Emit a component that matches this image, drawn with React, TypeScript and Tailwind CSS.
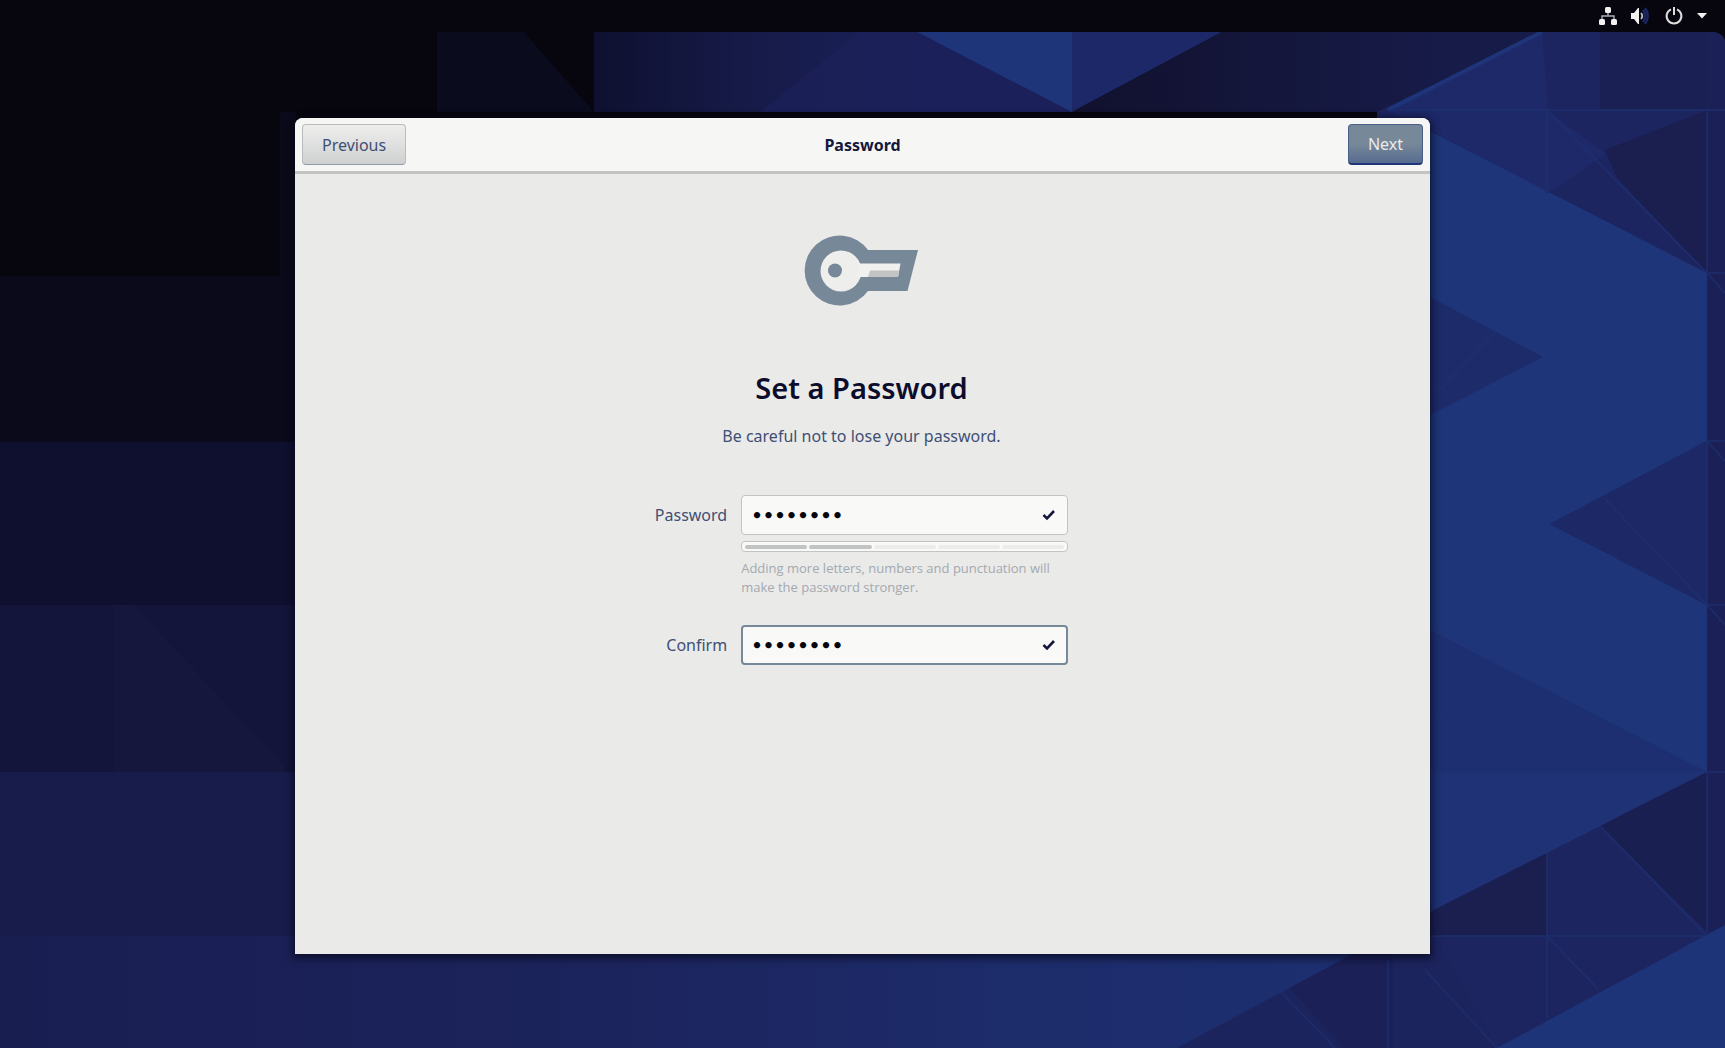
import { useState } from "react";

function Wallpaper() {
  return (
    <svg
      className="absolute inset-0 h-full w-full"
      viewBox="0 0 1725 1048"
      preserveAspectRatio="xMidYMid slice"
      aria-hidden="true"
    >
      <defs>
        <linearGradient id="sky" x1="594" y1="0" x2="917" y2="0" gradientUnits="userSpaceOnUse">
          <stop offset="0" stopColor="#0f1030" />
          <stop offset="0.5" stopColor="#161b49" />
          <stop offset="1" stopColor="#1b215a" />
        </linearGradient>
        <linearGradient id="dusk" x1="1072" y1="0" x2="1450" y2="0" gradientUnits="userSpaceOnUse">
          <stop offset="0" stopColor="#11112e" />
          <stop offset="1" stopColor="#171b48" />
        </linearGradient>
        <linearGradient id="floor" x1="0" y1="0" x2="1350" y2="0" gradientUnits="userSpaceOnUse">
          <stop offset="0" stopColor="#191e51" />
          <stop offset="0.45" stopColor="#1c245d" />
          <stop offset="0.75" stopColor="#1d2c6b" />
          <stop offset="1" stopColor="#1d2f70" />
        </linearGradient>
      </defs>
      <rect width="1725" height="1048" fill="#07060f" />
      <path d="M437 32h87l70 80h-157z" fill="#0b0b1e" />
      <path d="M594 32h323l160 80H594z" fill="url(#sky)" />
      <path d="M760 112l100-80h57l155 80z" fill="#1c215a" opacity="0.7" />
      <path d="M917 32h155v80z" fill="#1e3579" />
      <path d="M1072 32h150l-150 80z" fill="#1d2868" />
      <path d="M1222 32h320l-154 80h-316z" fill="url(#dusk)" />
      <rect y="276" width="296" height="166" fill="#0b0a1b" />
      <rect y="442" width="296" height="163" fill="#0f1030" />
      <rect y="605" width="296" height="167" fill="#13153a" />
      <path d="M114 605h20l150 160v7h-170z" fill="#15173d" />
      <rect y="772" width="296" height="164" fill="#181c4b" />
      <rect y="936" width="1450" height="112" fill="url(#floor)" />
      <rect x="280" y="112" width="16" height="164" fill="#0a0a1a" />

      <path d="M1542 32h183v1016h-348V112z" fill="#1d2560" />
      <path d="M1388 110l154-78 6 78-1 82-117-62z" fill="#1d2968" />
      <path d="M1542 32l-154 78" stroke="#1e3579" strokeWidth="4" />
      <path d="M1600 32h125v78h-125z" fill="#1b2054" />
      <path d="M1605 150l102-40v163l-90-95z" fill="#1a1f50" />
      <path d="M1707 32h18v900h-18z" fill="#1b2157" />
      <path d="M1430 131l277 142v168l-157 83 157 81v167l-277 140z" fill="#1e3579" />
      <path d="M1430 297l113 60-113 58z" fill="#1d2b6a" />
      <path d="M1430 630l277 142h-277z" fill="#1e2f71" />
      <path d="M1430 772h277l-277 140z" fill="#1e3275" />
      <path d="M1707 441l-157 83 157 81z" fill="#1d2867" />
      <path d="M1430 912l117-59v83h-117z" fill="#1a1f50" />
      <path d="M1600 826l107-54v160z" fill="#1a1f52" />
      <path d="M1380 940l-27 14-176 94h320l-60-108z" fill="#1c245d" />
      <path d="M1290 988l63-34h40v94h-50z" fill="#1b2056" />
      <path d="M1725 925l-228 123h228z" fill="#1e3478" />
      <path d="M1500 112l47 82 59-40-59-44z" fill="#1d2968" />
      <g stroke="#1e3272" strokeWidth="2" fill="none" opacity="0.6">
        <path d="M1388 110h337M1430 936h277M1430 772h295M1707 605h18M1707 441h18M1707 273h18" />
        <path d="M1547 110v82M1547 853v165M1707 110v163M1707 441v164M1707 772v160" />
        <path d="M1547 110l160 163M1604 498l103 107M1600 826l107 110M1547 936l52 54" />
        <path d="M1425 970l72 78M1437 392l58-60M1437 720l58-60" />
        <path d="M1281 992l54 56M1388 960v88M1707 273l18 20M1707 441l18 20M1707 605l18 20" />
      </g>
      <path d="M1715 32h10v8q-2-6-10-8" fill="#07060f" />
    </svg>
  );
}

function NetworkIcon() {
  return (
    <svg width="20" height="20" viewBox="0 0 20 20" fill="#f2f2f2" aria-hidden="true">
      <rect x="7" y="1" width="6" height="6" rx="1.500" />
      <rect x="1" y="13" width="6" height="6" rx="1.500" />
      <rect x="13" y="13" width="6" height="6" rx="1.500" />
      <path d="M10 7v3M4 13v-3h12v3" stroke="#a9aeb8" strokeWidth="1.400" fill="none" />
    </svg>
  );
}

function VolumeIcon() {
  return (
    <svg width="20" height="20" viewBox="0 0 20 20" aria-hidden="true">
      <path d="M1 7h3l4-5h1v16H8l-4-5H1z" fill="#f2f2f2" />
      <path d="M11 7q2.500 3 0 6" stroke="#c2c4c4" strokeWidth="1.800" fill="none" />
      <path d="M13 4q4 6 0 12M15 2q5.500 8 0 16" stroke="#1c2762" strokeWidth="2.400" fill="none" />
    </svg>
  );
}

function PowerIcon() {
  return (
    <svg width="20" height="20" viewBox="0 0 20 20" fill="none" stroke="#dcdddd" strokeWidth="2" aria-hidden="true">
      <path d="M7 3.400a7.400 7.400 0 1 0 6 0" />
      <path d="M10 1v8" />
    </svg>
  );
}

function TopBar() {
  return (
    <div className="relative flex h-8 items-center justify-end bg-[#07060f] pr-[17px] pb-px">
      <button type="button" aria-label="System menu" className="flex items-center">
        <NetworkIcon />
        <span className="ml-3 flex">
          <VolumeIcon />
        </span>
        <span className="ml-3.5 flex">
          <PowerIcon />
        </span>
        <svg className="ml-3" width="12" height="6" viewBox="0 0 12 6" fill="#f2f2f2" aria-hidden="true">
          <path d="M1 0h10L6 5.500z" />
        </svg>
      </button>
    </div>
  );
}

function KeyIcon() {
  return (
    <svg className="mx-auto" width="122" height="72" viewBox="-5 0 122 72" aria-hidden="true">
      <path d="M62 15H112L101.500 56H62A35 35 0 1 1 62 15z" fill="#778899" />
      <circle cx="35" cy="36" r="20.500" fill="#eeeeed" />
      <path d="M52 28.500H94.500L92 42H52z" fill="#f1f1f0" />
      <path d="M64 35.500H93L92 42H62z" fill="#c2c4c4" />
      <circle cx="29" cy="35.500" r="7" fill="#778899" />
    </svg>
  );
}

function PasswordField({
  id,
  value,
  onChange,
  focused = false,
}: {
  id: string;
  value: string;
  onChange: (value: string) => void;
  focused?: boolean;
}) {
  return (
    <div className="relative">
      <input
        id={id}
        type="password"
        value={value}
        onChange={(e) => onChange(e.target.value)}
        className={
          focused
            ? "block h-10 w-full rounded-sm border-2 border-[#778899] bg-[#f9faf8] pr-10 pl-2 font-['DejaVu_Sans',sans-serif] text-[18px] font-bold text-[#07060f] outline-none"
            : "block h-10 w-full rounded-sm border border-[#c2c4c4] bg-[#f9faf8] pr-10 pl-[9px] font-['DejaVu_Sans',sans-serif] text-[18px] font-bold text-[#07060f] outline-none"
        }
      />
      <svg
        className="absolute top-3.5 right-3"
        width="14"
        height="12"
        viewBox="0 0 14 12"
        fill="none"
        stroke="#15173d"
        strokeWidth="2.600"
        aria-hidden="true"
      >
        <path d="M1.500 6l3.500 3.400 7-7.400" />
      </svg>
    </div>
  );
}

const strengthSegments = [true, true, false, false, false];

export default function App() {
  const [password, setPassword] = useState("password");
  const [confirm, setConfirm] = useState("password");

  return (
    <div className="relative flex min-h-screen flex-col overflow-hidden bg-[#07060f] font-['Noto_Sans','Open_Sans',sans-serif] text-base text-[#3f4f74]">
      <Wallpaper />
      <TopBar />
      <main className="relative flex flex-1 justify-center px-6 pt-[86px] pb-[94px]">
        <section className="flex w-full max-w-[1135px] flex-col overflow-hidden rounded-t-lg bg-[#eaeae9] shadow-[0_2px_8px_2px_rgba(5,5,20,0.7)]">
          <header className="grid grid-cols-[1fr_auto_1fr] items-center border-b-3 border-[#c2c4c4] bg-[#f6f7f5] px-[7px] pt-1.5 pb-1.5">
            <button
              type="button"
              className="h-[41px] justify-self-start rounded-sm border border-[#b9bcbd] border-b-[#939ca6] bg-linear-to-b from-[#eeeeed] to-[#cfd1d1] px-[19px]"
            >
              Previous
            </button>
            <h2 className="text-base font-bold text-[#15173d]">Password</h2>
            <button
              type="submit"
              form="password-form"
              className="h-[41px] justify-self-end rounded-sm border border-[#4a5f88] border-b-2 border-b-[#1e3579] bg-linear-to-b from-[#778899] from-50% to-[#566b90] px-[19px] text-[#eaeae9]"
            >
              Next
            </button>
          </header>
          <div className="flex-1 pt-[61px] pr-[18px] pb-10 pl-4 text-center">
            <KeyIcon />
            <h1 className="mt-[61px] text-[29px] leading-10 font-semibold text-[#0c0d2c]">Set a Password</h1>
            <p className="mt-4 leading-6">Be careful not to lose your password.</p>
            <form
              id="password-form"
              onSubmit={(e) => e.preventDefault()}
              className="mx-auto mt-[47px] grid w-fit grid-cols-[auto_327px] gap-x-3.5 text-left"
            >
              <label htmlFor="password" className="text-right leading-10">
                Password
              </label>
              <div>
                <PasswordField id="password" value={password} onChange={setPassword} />
                <div
                  role="meter"
                  aria-label="Password strength"
                  aria-valuemin={0}
                  aria-valuemax={5}
                  aria-valuenow={2}
                  className="mt-1.5 flex h-[11px] items-center gap-0.5 rounded-sm border border-[#c2c4c4] bg-[#f9faf8] px-[3px]"
                >
                  {strengthSegments.map((filled, i) => (
                    <span
                      key={i}
                      className={filled ? "h-1 flex-1 rounded-xs bg-[#c2c4c4]" : "h-1 flex-1 rounded-xs bg-[#ececeb]"}
                    />
                  ))}
                </div>
                <p className="mt-[7px] font-['Open_Sans',sans-serif] text-[13px] leading-[19px] text-[#a3a9af]">
                  Adding more letters, numbers and punctuation will make the password stronger.
                </p>
              </div>
              <label htmlFor="confirm" className="mt-7 text-right leading-10">
                Confirm
              </label>
              <div className="mt-7">
                <PasswordField id="confirm" value={confirm} onChange={setConfirm} focused />
              </div>
            </form>
          </div>
        </section>
      </main>
    </div>
  );
}
